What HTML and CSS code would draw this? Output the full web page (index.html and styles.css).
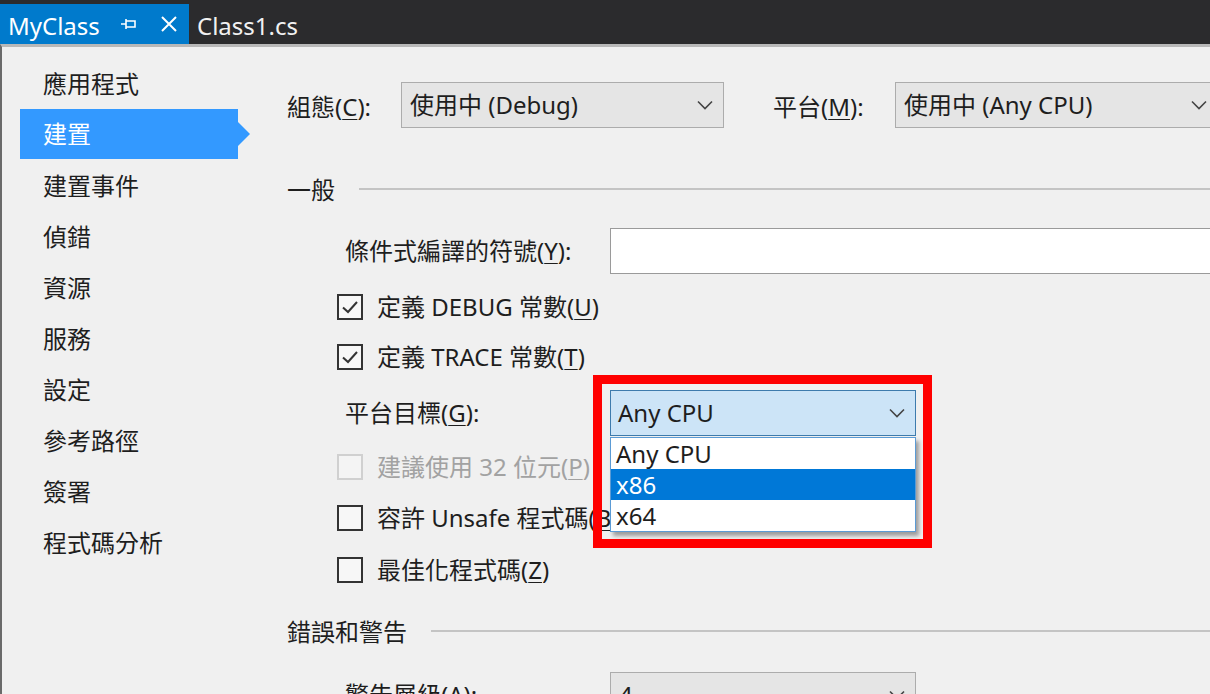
FILE: index.html
```html
<!DOCTYPE html>
<html lang="zh-Hant">
<head>
<meta charset="utf-8">
<title>MyClass</title>
<link rel="stylesheet" href="styles.css">
</head>
<body>
<div class="tabbar">
  <div class="tab active">
    <span class="tab-title">MyClass</span>
    <svg class="pin" width="18" height="14" viewBox="0 0 18 14"><path d="M1 7H6M6 2V12M6 4H15V10H6" fill="none" stroke="#fff" stroke-width="1.6"/></svg>
    <svg class="close" width="18" height="18" viewBox="0 0 18 18"><path d="M2 2L16 16M16 2L2 16" fill="none" stroke="#fff" stroke-width="2"/></svg>
  </div>
  <div class="tab">
    <span class="tab-title">Class1.cs</span>
  </div>
</div>
<div class="page">
  <nav class="sidebar">
    <div class="nav-item">應用程式</div>
    <div class="nav-item selected">建置</div>
    <div class="nav-item">建置事件</div>
    <div class="nav-item">偵錯</div>
    <div class="nav-item">資源</div>
    <div class="nav-item">服務</div>
    <div class="nav-item">設定</div>
    <div class="nav-item">參考路徑</div>
    <div class="nav-item">簽署</div>
    <div class="nav-item">程式碼分析</div>
  </nav>
  <main class="main">
    <div class="config-row">
      <span class="cfg-label">組態(<u>C</u>):</span>
      <div class="combo cfg-combo">
        <span class="combo-text">使用中 (Debug)</span>
        <svg class="chev" width="16" height="10" viewBox="0 0 16 10"><path d="M1 1.5L8 8.5L15 1.5" fill="none" stroke="#444" stroke-width="1.6"/></svg>
      </div>
      <span class="cfg-label plat">平台(<u>M</u>):</span>
      <div class="combo cfg-combo">
        <span class="combo-text">使用中 (Any CPU)</span>
        <svg class="chev" width="16" height="10" viewBox="0 0 16 10"><path d="M1 1.5L8 8.5L15 1.5" fill="none" stroke="#444" stroke-width="1.6"/></svg>
      </div>
    </div>
    <div class="separator"></div>

    <div class="section-head first"><span>一般</span><div class="section-line"></div></div>

    <div class="field-row cond">
      <span class="field-label">條件式編譯的符號(<u>Y</u>):</span>
      <div class="textbox"></div>
    </div>

    <div class="check-row r-debug">
      <span class="checkbox checked"><svg width="20" height="20" viewBox="0 0 20 20"><path d="M3 10.5L8 15L17 5" fill="none" stroke="#333" stroke-width="2"/></svg></span>
      <span>定義 DEBUG 常數(<u>U</u>)</span>
    </div>
    <div class="check-row r-trace">
      <span class="checkbox checked"><svg width="20" height="20" viewBox="0 0 20 20"><path d="M3 10.5L8 15L17 5" fill="none" stroke="#333" stroke-width="2"/></svg></span>
      <span>定義 TRACE 常數(<u>T</u>)</span>
    </div>

    <div class="field-row target">
      <span class="field-label">平台目標(<u>G</u>):</span>
      <div class="combo open-combo">
        <span class="combo-text">Any CPU</span>
        <svg class="chev" width="16" height="10" viewBox="0 0 16 10"><path d="M1 1.5L8 8.5L15 1.5" fill="none" stroke="#444" stroke-width="1.6"/></svg>
        <div class="dropdown">
          <div class="dd-item">Any CPU</div>
          <div class="dd-item active">x86</div>
          <div class="dd-item">x64</div>
        </div>
        <div class="highlight"></div>
      </div>
    </div>

    <div class="check-row disabled r-32">
      <span class="checkbox"></span>
      <span>建議使用 32 位元(<u>P</u>)</span>
    </div>
    <div class="check-row r-unsafe">
      <span class="checkbox"></span>
      <span>容許 Unsafe 程式碼(<u>B</u>)</span>
    </div>
    <div class="check-row r-opt">
      <span class="checkbox"></span>
      <span>最佳化程式碼(<u>Z</u>)</span>
    </div>

    <div class="section-head errors"><span>錯誤和警告</span><div class="section-line"></div></div>

    <div class="field-row warn">
      <span class="field-label">警告層級(<u>A</u>):</span>
      <div class="combo">
        <span class="combo-text">4</span>
        <svg class="chev" width="16" height="10" viewBox="0 0 16 10"><path d="M1 1.5L8 8.5L15 1.5" fill="none" stroke="#444" stroke-width="1.6"/></svg>
      </div>
    </div>
  </main>
</div>
</body>
</html>
```
FILE: styles.css
```css
* { box-sizing: border-box; }
html, body {
  margin: 0;
  padding: 0;
  width: 1210px;
  height: 694px;
  overflow: hidden;
  background: #f0f0f0;
  font-family: "Noto Sans", "Noto Sans CJK TC", sans-serif;
  font-size: 24px;
  color: #1e1e1e;
}
u { text-decoration: underline; text-underline-offset: 3px; text-decoration-thickness: 1px; }

.tabbar {
  height: 44px;
  background: #2b2b2d;
  padding-top: 4px;
  display: flex;
  align-items: stretch;
}
.tab {
  display: flex;
  align-items: center;
  padding: 0 10px 0 8px;
  color: #f1f1f1;
  line-height: 1;
}
.tab.active {
  background: #007acc;
  color: #fff;
  width: 189px;
}
.tab-title { position: relative; top: 2px; }
.tab .pin { margin-left: 20px; }
.tab .close { margin-left: 22px; }

.page {
  display: flex;
  height: 650px;
  border-top: 3px solid #b8b8b8;
  border-left: 2px solid #6a6a6a;
}
.sidebar {
  width: 280px;
  flex: none;
  padding-top: 11px;
  padding-left: 18px;
}
.nav-item {
  position: relative;
  width: 218px;
  height: 51px;
  padding-left: 23px;
  display: flex;
  align-items: center;
  line-height: 1;
}
.nav-item.selected {
  background: #3399ff;
  color: #fff;
  height: 50px;
  margin-bottom: 1px;
}
.nav-item.selected::after {
  content: "";
  position: absolute;
  left: 100%;
  top: 13px;
  border-left: 12px solid #3399ff;
  border-top: 12px solid transparent;
  border-bottom: 12px solid transparent;
}

.main {
  flex: 1;
  min-width: 0;
  overflow: hidden;
  padding-top: 35px;
  display: flex;
  flex-direction: column;
}
.config-row {
  display: flex;
  align-items: center;
  height: 46px;
  padding-left: 5px;
  white-space: nowrap;
}
.cfg-label { width: 114px; flex: none; }
.cfg-label.plat { margin-left: 49px; width: 122px; }
.combo {
  position: relative;
  display: flex;
  align-items: center;
  height: 46px;
  width: 306px;
  flex: none;
  background: #e5e5e5;
  border: 1px solid #acacac;
  padding: 0 10px 0 8px;
  white-space: nowrap;
}
.cfg-combo { width: 323px; }
.combo-text { flex: 1; line-height: 1; }
.chev { flex: none; }

.separator {
  margin-top: 31px;
  height: 2px;
  background: #c4c4c4;
}
.section-head {
  display: flex;
  align-items: center;
  height: 30px;
  padding-left: 5px;
  line-height: 1;
}
.section-head.first { margin-top: 19px; }
.section-head.errors { margin-top: 37px; }
.section-line {
  flex: 1;
  height: 2px;
  background: #c4c4c4;
  margin-left: 24px;
  margin-top: -3px;
}
.field-row {
  display: flex;
  align-items: center;
  height: 46px;
  padding-left: 63px;
  white-space: nowrap;
}
.field-label { width: 265px; flex: none; line-height: 1; }
.field-row.cond { margin-top: 26px; }
.field-row.target { margin-top: 20px; }
.field-row.warn { margin-top: 28px; }
.textbox {
  flex: none;
  width: 640px;
  height: 46px;
  background: #fff;
  border: 1px solid #9a9a9a;
}

.check-row {
  display: flex;
  align-items: center;
  height: 26px;
  padding-left: 55px;
  white-space: nowrap;
  line-height: 1;
}
.checkbox {
  width: 26px;
  height: 26px;
  flex: none;
  border: 2px solid #333;
  background: #f7f7f7;
  margin-right: 14px;
  display: flex;
  align-items: center;
  justify-content: center;
}
.check-row.disabled { color: #a2a2a2; }
.check-row.disabled .checkbox { border-color: #d0d0d0; background: #f4f4f4; }
.r-debug { margin-top: 20px; }
.r-trace { margin-top: 24px; }
.r-32 { margin-top: 18px; }
.r-unsafe { margin-top: 25px; }
.r-opt { margin-top: 26px; }

.open-combo {
  background: #cce4f7;
  border-color: #3d7bad;
  padding-left: 7px;
}
.dropdown {
  position: absolute;
  left: -1px;
  top: 46px;
  width: 306px;
  background: #fff;
  border: 1px solid #5b9bd5;
  box-shadow: 3px 4px 4px rgba(0,0,0,0.35);
  z-index: 2;
}
.dd-item {
  height: 31px;
  display: flex;
  align-items: center;
  padding-left: 5px;
  line-height: 1;
}
.dd-item.active {
  background: #0078d7;
  color: #fff;
}
.highlight {
  position: absolute;
  left: -18px;
  top: -16px;
  width: 339px;
  height: 173px;
  border: 9px solid #ff0000;
  z-index: 3;
  pointer-events: none;
}
```
